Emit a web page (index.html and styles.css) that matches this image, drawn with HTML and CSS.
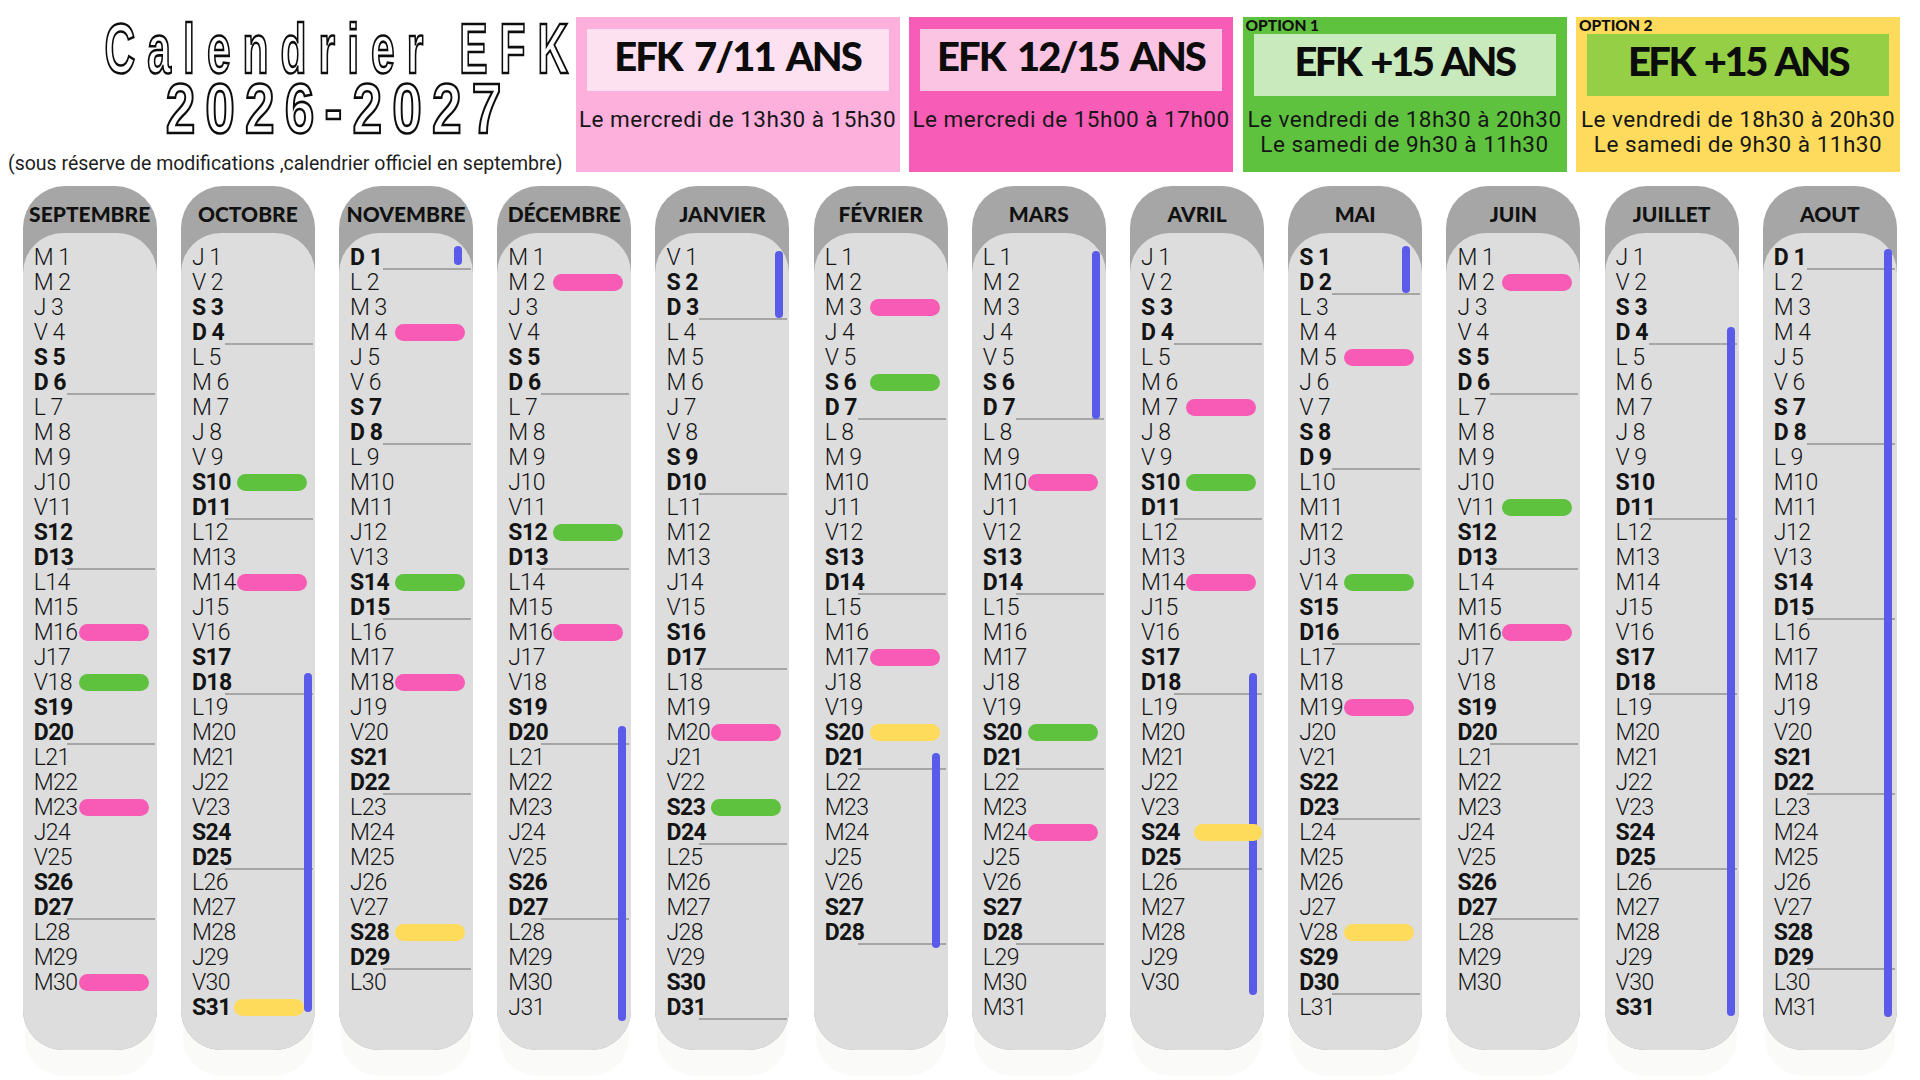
FILE: index.html
```html
<!DOCTYPE html>
<html lang="fr">
<head>
<meta charset="utf-8">
<title>Calendrier EFK 2026-2027</title>
<link rel="stylesheet" href="styles.css">
</head>
<body>
<header class="top">
  <div class="intro">
    <h1 class="title">
      <span class="ln ln1"><span>Calendrier EFK</span></span>
      <span class="ln ln2"><span>2026-2027</span></span>
    </h1>
    <p class="note">(sous réserve de modifications ,calendrier officiel en septembre)</p>
  </div>
  <div class="groups">
    <section class="group g1">
      <div class="label">EFK 7/11 ANS</div>
      <p class="desc">Le mercredi de 13h30 à 15h30</p>
    </section>
    <section class="group g2">
      <div class="label">EFK 12/15 ANS</div>
      <p class="desc">Le mercredi de 15h00 à 17h00</p>
    </section>
    <section class="group g3 opt-group">
      <div class="opt">OPTION 1</div>
      <div class="label">EFK +15 ANS</div>
      <p class="desc">Le vendredi de 18h30 à 20h30<br>Le samedi de 9h30 à 11h30</p>
    </section>
    <section class="group g4 opt-group">
      <div class="opt">OPTION 2</div>
      <div class="label">EFK +15 ANS</div>
      <p class="desc">Le vendredi de 18h30 à 20h30<br>Le samedi de 9h30 à 11h30</p>
    </section>
  </div>
</header>

<main class="months">
  <!-- SEPTEMBRE -->
  <div class="month">
    <div class="mhead">SEPTEMBRE</div>
    <div class="mbody"><div class="days-wrap"><ol class="days">
      <li>M 1</li><li>M 2</li><li>J 3</li><li>V 4</li><li class="w">S 5</li><li class="su">D 6</li>
      <li>L 7</li><li>M 8</li><li>M 9</li><li>J10</li><li>V11</li><li class="w">S12</li><li class="su">D13</li>
      <li>L14</li><li>M15</li><li>M16<i class="ev pk"></i></li><li>J17</li><li>V18<i class="ev gr"></i></li><li class="w">S19</li><li class="su">D20</li>
      <li>L21</li><li>M22</li><li>M23<i class="ev pk"></i></li><li>J24</li><li>V25</li><li class="w">S26</li><li class="su">D27</li>
      <li>L28</li><li>M29</li><li>M30<i class="ev pk"></i></li>
    </ol></div></div>
  </div>

  <!-- OCTOBRE -->
  <div class="month">
    <div class="mhead">OCTOBRE</div>
    <div class="mbody"><div class="days-wrap"><ol class="days">
      <li>J 1</li><li>V 2</li><li class="w">S 3</li><li class="su">D 4</li>
      <li>L 5</li><li>M 6</li><li>M 7</li><li>J 8</li><li>V 9</li><li class="w">S10<i class="ev gr"></i></li><li class="su">D11</li>
      <li>L12</li><li>M13</li><li>M14<i class="ev pk"></i></li><li>J15</li><li>V16</li><li class="w">S17</li><li class="su">D18</li>
      <li>L19</li><li>M20</li><li>M21</li><li>J22</li><li>V23</li><li class="w">S24</li><li class="su">D25</li>
      <li>L26</li><li>M27</li><li>M28</li><li>J29</li><li>V30</li><li class="w">S31<i class="ev ye sh"></i></li>
    </ol><span class="vac" style="top:428px;height:339px;right:3px"></span></div></div>
  </div>

  <!-- NOVEMBRE -->
  <div class="month">
    <div class="mhead">NOVEMBRE</div>
    <div class="mbody"><div class="days-wrap"><ol class="days">
      <li class="su">D 1</li>
      <li>L 2</li><li>M 3</li><li>M 4<i class="ev pk"></i></li><li>J 5</li><li>V 6</li><li class="w">S 7</li><li class="su">D 8</li>
      <li>L 9</li><li>M10</li><li>M11</li><li>J12</li><li>V13</li><li class="w">S14<i class="ev gr"></i></li><li class="su">D15</li>
      <li>L16</li><li>M17</li><li>M18<i class="ev pk"></i></li><li>J19</li><li>V20</li><li class="w">S21</li><li class="su">D22</li>
      <li>L23</li><li>M24</li><li>M25</li><li>J26</li><li>V27</li><li class="w">S28<i class="ev ye"></i></li><li class="su">D29</li>
      <li>L30</li>
    </ol><span class="vac" style="top:1px;height:19px;right:11px"></span></div></div>
  </div>

  <!-- DECEMBRE -->
  <div class="month">
    <div class="mhead">DÉCEMBRE</div>
    <div class="mbody"><div class="days-wrap"><ol class="days">
      <li>M 1</li><li>M 2<i class="ev pk"></i></li><li>J 3</li><li>V 4</li><li class="w">S 5</li><li class="su">D 6</li>
      <li>L 7</li><li>M 8</li><li>M 9</li><li>J10</li><li>V11</li><li class="w">S12<i class="ev gr"></i></li><li class="su">D13</li>
      <li>L14</li><li>M15</li><li>M16<i class="ev pk"></i></li><li>J17</li><li>V18</li><li class="w">S19</li><li class="su">D20</li>
      <li>L21</li><li>M22</li><li>M23</li><li>J24</li><li>V25</li><li class="w">S26</li><li class="su">D27</li>
      <li>L28</li><li>M29</li><li>M30</li><li>J31</li>
    </ol><span class="vac" style="top:481px;height:295px;right:5px"></span></div></div>
  </div>

  <!-- JANVIER -->
  <div class="month">
    <div class="mhead">JANVIER</div>
    <div class="mbody"><div class="days-wrap"><ol class="days">
      <li>V 1</li><li class="w">S 2</li><li class="su">D 3</li>
      <li>L 4</li><li>M 5</li><li>M 6</li><li>J 7</li><li>V 8</li><li class="w">S 9</li><li class="su">D10</li>
      <li>L11</li><li>M12</li><li>M13</li><li>J14</li><li>V15</li><li class="w">S16</li><li class="su">D17</li>
      <li>L18</li><li>M19</li><li>M20<i class="ev pk"></i></li><li>J21</li><li>V22</li><li class="w">S23<i class="ev gr"></i></li><li class="su">D24</li>
      <li>L25</li><li>M26</li><li>M27</li><li>J28</li><li>V29</li><li class="w">S30</li><li class="su">D31</li>
    </ol><span class="vac" style="top:6px;height:67px;right:6px"></span></div></div>
  </div>

  <!-- FEVRIER -->
  <div class="month">
    <div class="mhead">FÉVRIER</div>
    <div class="mbody"><div class="days-wrap"><ol class="days">
      <li>L 1</li><li>M 2</li><li>M 3<i class="ev pk"></i></li><li>J 4</li><li>V 5</li><li class="w">S 6<i class="ev gr"></i></li><li class="su">D 7</li>
      <li>L 8</li><li>M 9</li><li>M10</li><li>J11</li><li>V12</li><li class="w">S13</li><li class="su">D14</li>
      <li>L15</li><li>M16</li><li>M17<i class="ev pk"></i></li><li>J18</li><li>V19</li><li class="w">S20<i class="ev ye"></i></li><li class="su">D21</li>
      <li>L22</li><li>M23</li><li>M24</li><li>J25</li><li>V26</li><li class="w">S27</li><li class="su">D28</li>
    </ol><span class="vac" style="top:508px;height:195px;right:8px"></span></div></div>
  </div>

  <!-- MARS -->
  <div class="month">
    <div class="mhead">MARS</div>
    <div class="mbody"><div class="days-wrap"><ol class="days">
      <li>L 1</li><li>M 2</li><li>M 3</li><li>J 4</li><li>V 5</li><li class="w">S 6</li><li class="su">D 7</li>
      <li>L 8</li><li>M 9</li><li>M10<i class="ev pk"></i></li><li>J11</li><li>V12</li><li class="w">S13</li><li class="su">D14</li>
      <li>L15</li><li>M16</li><li>M17</li><li>J18</li><li>V19</li><li class="w">S20<i class="ev gr"></i></li><li class="su">D21</li>
      <li>L22</li><li>M23</li><li>M24<i class="ev pk"></i></li><li>J25</li><li>V26</li><li class="w">S27</li><li class="su">D28</li>
      <li>L29</li><li>M30</li><li>M31</li>
    </ol><span class="vac" style="top:6px;height:168px;right:6px"></span></div></div>
  </div>

  <!-- AVRIL -->
  <div class="month">
    <div class="mhead">AVRIL</div>
    <div class="mbody"><div class="days-wrap"><ol class="days">
      <li>J 1</li><li>V 2</li><li class="w">S 3</li><li class="su">D 4</li>
      <li>L 5</li><li>M 6</li><li>M 7<i class="ev pk"></i></li><li>J 8</li><li>V 9</li><li class="w">S10<i class="ev gr"></i></li><li class="su">D11</li>
      <li>L12</li><li>M13</li><li>M14<i class="ev pk"></i></li><li>J15</li><li>V16</li><li class="w">S17</li><li class="su">D18</li>
      <li>L19</li><li>M20</li><li>M21</li><li>J22</li><li>V23</li><li class="w">S24<i class="ev ye wide"></i></li><li class="su">D25</li>
      <li>L26</li><li>M27</li><li>M28</li><li>J29</li><li>V30</li>
    </ol><span class="vac" style="top:428px;height:322px;right:7px"></span></div></div>
  </div>

  <!-- MAI -->
  <div class="month">
    <div class="mhead">MAI</div>
    <div class="mbody"><div class="days-wrap"><ol class="days">
      <li class="w">S 1</li><li class="su">D 2</li>
      <li>L 3</li><li>M 4</li><li>M 5<i class="ev pk"></i></li><li>J 6</li><li>V 7</li><li class="w">S 8</li><li class="su">D 9</li>
      <li>L10</li><li>M11</li><li>M12</li><li>J13</li><li>V14<i class="ev gr"></i></li><li class="w">S15</li><li class="su">D16</li>
      <li>L17</li><li>M18</li><li>M19<i class="ev pk"></i></li><li>J20</li><li>V21</li><li class="w">S22</li><li class="su">D23</li>
      <li>L24</li><li>M25</li><li>M26</li><li>J27</li><li>V28<i class="ev ye"></i></li><li class="w">S29</li><li class="su">D30</li>
      <li>L31</li>
    </ol><span class="vac" style="top:1px;height:47px;right:12px"></span></div></div>
  </div>

  <!-- JUIN -->
  <div class="month">
    <div class="mhead">JUIN</div>
    <div class="mbody"><div class="days-wrap"><ol class="days">
      <li>M 1</li><li>M 2<i class="ev pk"></i></li><li>J 3</li><li>V 4</li><li class="w">S 5</li><li class="su">D 6</li>
      <li>L 7</li><li>M 8</li><li>M 9</li><li>J10</li><li>V11<i class="ev gr"></i></li><li class="w">S12</li><li class="su">D13</li>
      <li>L14</li><li>M15</li><li>M16<i class="ev pk"></i></li><li>J17</li><li>V18</li><li class="w">S19</li><li class="su">D20</li>
      <li>L21</li><li>M22</li><li>M23</li><li>J24</li><li>V25</li><li class="w">S26</li><li class="su">D27</li>
      <li>L28</li><li>M29</li><li>M30</li>
    </ol></div></div>
  </div>

  <!-- JUILLET -->
  <div class="month">
    <div class="mhead">JUILLET</div>
    <div class="mbody"><div class="days-wrap"><ol class="days">
      <li>J 1</li><li>V 2</li><li class="w">S 3</li><li class="su">D 4</li>
      <li>L 5</li><li>M 6</li><li>M 7</li><li>J 8</li><li>V 9</li><li class="w">S10</li><li class="su">D11</li>
      <li>L12</li><li>M13</li><li>M14</li><li>J15</li><li>V16</li><li class="w">S17</li><li class="su">D18</li>
      <li>L19</li><li>M20</li><li>M21</li><li>J22</li><li>V23</li><li class="w">S24</li><li class="su">D25</li>
      <li>L26</li><li>M27</li><li>M28</li><li>J29</li><li>V30</li><li class="w">S31</li>
    </ol><span class="vac" style="top:82px;height:689px;right:4px"></span></div></div>
  </div>

  <!-- AOUT -->
  <div class="month">
    <div class="mhead">AOUT</div>
    <div class="mbody"><div class="days-wrap"><ol class="days">
      <li class="su">D 1</li>
      <li>L 2</li><li>M 3</li><li>M 4</li><li>J 5</li><li>V 6</li><li class="w">S 7</li><li class="su">D 8</li>
      <li>L 9</li><li>M10</li><li>M11</li><li>J12</li><li>V13</li><li class="w">S14</li><li class="su">D15</li>
      <li>L16</li><li>M17</li><li>M18</li><li>J19</li><li>V20</li><li class="w">S21</li><li class="su">D22</li>
      <li>L23</li><li>M24</li><li>M25</li><li>J26</li><li>V27</li><li class="w">S28</li><li class="su">D29</li>
      <li>L30</li><li>M31</li>
    </ol><span class="vac" style="top:4px;height:768px;right:5px"></span></div></div>
  </div>
</main>
</body>
</html>
```

FILE: styles.css
```css
* { box-sizing: border-box; }

html, body {
  margin: 0;
  padding: 0;
  background: #ffffff;
}

body {
  width: 1920px;
  height: 1080px;
  overflow: hidden;
  font-family: Roboto, "Liberation Sans", sans-serif;
  color: #111111;
}

/* ---------- top band ---------- */
.top {
  display: flex;
  height: 186px;
}

.intro {
  flex: 0 0 575px;
  min-width: 0;
}

.title {
  margin: 0;
  padding: 19px 0 0 89px;
  font-family: "Liberation Sans", sans-serif;
  font-weight: 700;
  font-size: 71px;
  line-height: 60px;
  color: #ffffff;
  -webkit-text-stroke: 2.6px #0d0d0d;
}

.title .ln {
  display: flex;
  justify-content: center;
  white-space: nowrap;
}

.title .ln span {
  display: block;
  flex: none;
  transform-origin: 50% 50%;
}

.title .ln1 span {
  letter-spacing: 20px;
  margin-right: -20px;
  transform: scaleX(0.6);
}

.title .ln2 span {
  letter-spacing: 13.5px;
  margin-right: -13.5px;
  transform: scaleX(0.75);
}

.note {
  margin: 14px 0 0 8px;
  font-size: 19.5px;
  line-height: 22px;
  color: #1e1e1e;
  white-space: nowrap;
}

.groups {
  display: flex;
  gap: 9.5px;
  padding-top: 17px;
  margin-left: 0.5px;
}

.group {
  flex: 0 0 324px;
  height: 155px;
  padding: 12px 11px 0;
  display: flex;
  flex-direction: column;
}

.opt-group {
  padding-top: 0;
}

.opt {
  margin-left: -8px;
  font-family: Lato, "Liberation Sans", sans-serif;
  font-weight: 900;
  font-size: 15.5px;
  line-height: 17px;
  color: #111111;
}

.label {
  height: 62px;
  display: flex;
  align-items: center;
  justify-content: center;
  padding-bottom: 8px;
  font-family: Lato, "Liberation Sans", sans-serif;
  font-weight: 900;
  font-size: 40px;
  letter-spacing: -2px;
  word-spacing: 5px;
  color: #0c0c0c;
  white-space: nowrap;
}

.opt-group .label {
  letter-spacing: -2.5px;
  word-spacing: 3px;
}

.desc {
  margin: 16px -11px 0;
  text-align: center;
  font-size: 22.5px;
  line-height: 24.5px;
  letter-spacing: 0.5px;
  color: #161616;
  white-space: nowrap;
}

.opt-group .desc {
  margin-top: 11px;
}

.g1 { background: #fdb0dc; }
.g1 .label { background: #fde1f0; }
.g2 { background: #f75cb6; }
.g2 .label { background: #fcc4e3; }
.g3 { background: #5ec23f; }
.g3 .label { background: #c8eabc; }
.g4 { background: #ffdb5d; }
.g4 .label { background: #94cf45; }

/* ---------- months ---------- */
.months {
  display: flex;
  gap: 24.2px;
  padding-left: 22.7px;
}

.month {
  flex: 0 0 134px;
  height: 864px;
  background: #a6a6a6;
  border-radius: 42px 42px 40px 40px;
  display: flex;
  flex-direction: column;
  box-shadow: 0 28px 0 -2px #fafaf8;
}

.mhead {
  height: 47px;
  padding-top: 7px;
  display: flex;
  align-items: center;
  justify-content: center;
  font-family: Lato, "Liberation Sans", sans-serif;
  font-weight: 900;
  font-size: 21px;
  color: #111111;
  white-space: nowrap;
}

.mbody {
  flex: 1;
  background: #dddddd;
  border-radius: 40px;
  padding-top: 11.5px;
}

.days-wrap {
  position: relative;
}

.days {
  list-style: none;
  margin: 0;
  padding: 0;
}

.days li {
  height: 25px;
  display: flex;
  align-items: center;
  padding: 0 8px 0 11px;
  font-size: 23px;
  line-height: 25px;
  font-weight: 300;
  letter-spacing: -0.5px;
  white-space: pre;
  color: #141414;
}

.days .w,
.days .su {
  font-weight: 700;
}

.days .su {
  background: linear-gradient(#a5a5a5, #a5a5a5) no-repeat 44px 100% / 88px 2px;
}

.ev {
  flex: 0 0 70px;
  height: 17px;
  margin-left: auto;
  border-radius: 9px;
  position: relative;
  z-index: 1;
}

.ev.sh { margin-right: 3px; }
.ev.wide { flex-basis: 68px; margin-right: -6px; }

.pk { background: #f75bb6; }
.gr { background: #5fc23f; }
.ye { background: #fedb5b; }

.vac {
  position: absolute;
  right: 6px;
  width: 8px;
  border-radius: 4px;
  background: #5b5bea;
}
```
